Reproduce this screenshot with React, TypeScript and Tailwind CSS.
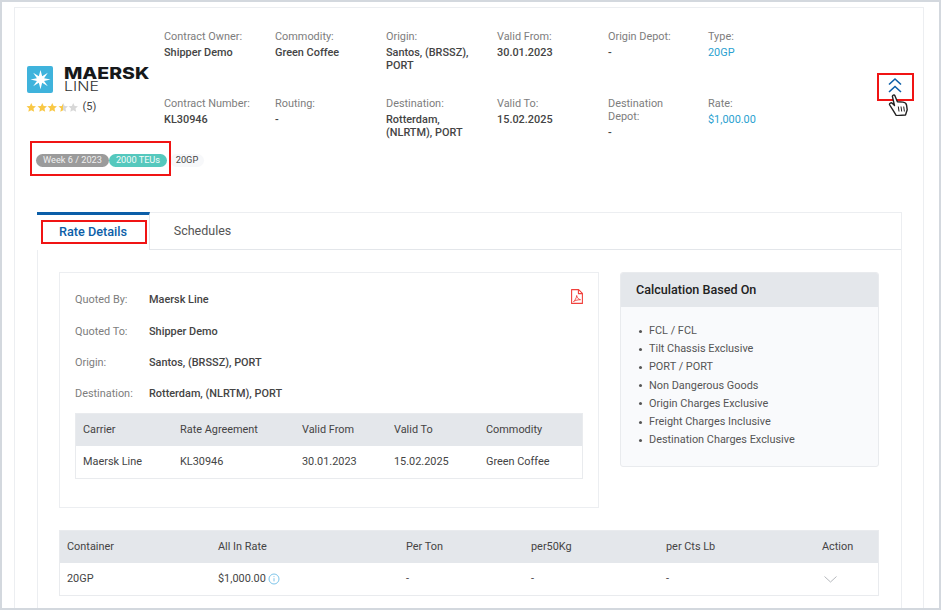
import React from "react";

const Field = ({ label, value, blue, w }: { label: React.ReactNode; value: React.ReactNode; blue?: boolean; w: string }) => (
  <div className={`${w} shrink-0`}>
    <div className="text-[10.9px] leading-[13px] text-[#7d7d7d]">{label}</div>
    <div className={`mt-[3px] text-[10.9px] leading-[13px] ${blue ? "font-normal text-[#2a9fd0]" : "font-medium text-[#444]"}`}>{value}</div>
  </div>
);

const Star = ({ c }: { c: string }) => (
  <svg width="10.5" height="11" viewBox="0 0 24 24" fill={c}>
    <path d="M12 1.5l3.2 7 7.6.8-5.7 5.1 1.6 7.5L12 18l-6.7 3.9 1.6-7.5L1.2 9.3l7.6-.8z" />
  </svg>
);

const Info = ({ label, value }: { label: string; value: string }) => (
  <div className="flex h-[31.3px] items-center text-[10.9px]">
    <span className="w-[74px] text-[#7d7d7d]">{label}</span>
    <span className="font-medium text-[#444]">{value}</span>
  </div>
);

const calc = [
  "FCL / FCL",
  "Tilt Chassis Exclusive",
  "PORT / PORT",
  "Non Dangerous Goods",
  "Origin Charges Exclusive",
  "Freight Charges Inclusive",
  "Destination Charges Exclusive",
];

export default function App() {
  return (
    <div className="relative h-[610px] w-[941px] overflow-hidden border-2 border-[#d3d8de] bg-white font-['Roboto',sans-serif]">
      <div className="ml-[12px] mt-[5px] h-[640px] w-[910px] border border-[#eceef1] bg-white">
        {/* header */}
        <div className="flex h-[204px]">
          <div className="w-[149px] shrink-0 pl-[12px] pt-[57px]">
            <div className="flex items-center">
              <div className="flex h-[27px] w-[26px] items-center justify-center rounded-[2px] bg-[#3fb3dc]">
                <svg width="21" height="21" viewBox="0 0 24 24" fill="#fff">
                  <path d="M12 1l1.9 7.4L20.4 4.2 16.1 10.5 23.5 12l-7.4 1.6 4.3 6.2-6.5-4.2L12 23l-1.9-7.4-6.5 4.2 4.3-6.2L.5 12l7.4-1.5L3.6 4.2l6.5 4.2z" />
                </svg>
              </div>
              <div className="ml-[11px] font-['Inter',sans-serif] text-[#16181a]">
                <div className="origin-left scale-x-[1.18] whitespace-nowrap text-[16.5px] font-extrabold leading-[16px]">MAERSK</div>
                <div className="origin-left scale-x-[1.28] text-[12.5px] font-light leading-[12px] text-[#333]">LINE</div>
              </div>
            </div>
            <div className="-ml-[1px] mt-[6px] flex items-center">
              <div className="flex">
                <Star c="#f9c846" /><Star c="#f9c846" /><Star c="#f9c846" />
                <svg width="10.5" height="11" viewBox="0 0 24 24">
                  <defs>
                    <linearGradient id="halfStar">
                      <stop offset="50%" stopColor="#f9c846" />
                      <stop offset="50%" stopColor="#d8d8d8" />
                    </linearGradient>
                  </defs>
                  <path fill="url(#halfStar)" d="M12 1.5l3.2 7 7.6.8-5.7 5.1 1.6 7.5L12 18l-6.7 3.9 1.6-7.5L1.2 9.3l7.6-.8z" />
                </svg>
                <Star c="#d8d8d8" />
              </div>
              <span className="ml-[4px] text-[11px] text-[#444]">(5)</span>
            </div>
            <div className="ml-[9px] mt-[38px] flex items-center whitespace-nowrap text-[9.2px]">
              <span className="flex h-[13px] w-[73px] shrink-0 items-center justify-center rounded-full bg-[#9b9b9b] text-[#f0f0f0]">Week 6 / 2023</span>
              <span className="flex h-[13px] w-[58px] shrink-0 items-center justify-center rounded-full bg-[#55c8bd] text-[#f4fbfa]">2000 TEUs</span>
              <span className="ml-[3px] flex h-[13px] w-[34px] shrink-0 items-center justify-center rounded-full bg-[#f7f8fa] text-[#444]">20GP</span>
            </div>
          </div>
          <div className="w-[650px] pt-[22px]">
            <div className="flex h-[67px]">
              <Field w="w-[111px]" label="Contract Owner:" value="Shipper Demo" />
              <Field w="w-[111px]" label="Commodity:" value="Green Coffee" />
              <Field w="w-[111px]" label="Origin:" value={<>Santos, (BRSSZ),<br />PORT</>} />
              <Field w="w-[111px]" label="Valid From:" value="30.01.2023" />
              <Field w="w-[100px]" label="Origin Depot:" value="-" />
              <Field w="w-[100px]" label="Type:" value="20GP" blue />
            </div>
            <div className="flex">
              <Field w="w-[111px]" label="Contract Number:" value="KL30946" />
              <Field w="w-[111px]" label="Routing:" value="-" />
              <Field w="w-[111px]" label="Destination:" value={<>Rotterdam,<br />(NLRTM), PORT</>} />
              <Field w="w-[111px]" label="Valid To:" value="15.02.2025" />
              <Field w="w-[100px]" label={<>Destination<br />Depot:</>} value="-" />
              <Field w="w-[100px]" label="Rate:" value="$1,000.00" blue />
            </div>
          </div>
        </div>

        {/* tab panel */}
        <div className="ml-[22px] w-[865px] border border-[#eceef1] pb-[40px]">
          <div className="flex h-[37px] border-b border-[#e3e6ea]">
            <div className="-ml-px -mt-px flex h-[38px] w-[113px] items-center justify-center border-r border-t-[3px] border-r-[#e3e6ea] border-t-[#0b5ea8] bg-white pb-[2px] text-[12.7px] font-medium text-[#0b5ea8]">
              Rate Details
            </div>
            <div className="flex w-[105px] items-center justify-center pt-[1px] text-[12.5px] text-[#555]">Schedules</div>
          </div>
          <div className="flex px-[21px] pt-[22px]">
            <div className="relative h-[236px] w-[540px] border border-[#eceef1] pl-[15px] pr-[15px] pt-[12px]">
              <svg className="absolute right-[15px] top-[16px]" width="12" height="15" viewBox="0 0 12 15" fill="none" stroke="#f0403c" strokeWidth="1.1" strokeLinejoin="round">
                <path d="M.6.6h7l3.8 3.8v10H.6z" />
                <path d="M7.4.6v4h4" />
                <path d="M2.5 12.5c1.5-1 3-3.6 3.2-6 .4 2.4 1.6 3.8 3.8 4.2-2.4 0-5 .6-7 1.8z" strokeWidth="0.9" />
              </svg>
              <Info label="Quoted By:" value="Maersk Line" />
              <Info label="Quoted To:" value="Shipper Demo" />
              <Info label="Origin:" value="Santos, (BRSSZ), PORT" />
              <Info label="Destination:" value="Rotterdam, (NLRTM), PORT" />
              <div className="mt-[3px] border border-[#e9ebee] text-[10.9px] text-[#444]">
                <div className="flex h-[32px] items-center bg-[#e4e7eb] pl-[7px]">
                  <span className="w-[97px]">Carrier</span>
                  <span className="w-[122px]">Rate Agreement</span>
                  <span className="w-[92px]">Valid From</span>
                  <span className="w-[92px]">Valid To</span>
                  <span>Commodity</span>
                </div>
                <div className="flex h-[32px] items-center pl-[7px]">
                  <span className="w-[97px]">Maersk Line</span>
                  <span className="w-[122px]">KL30946</span>
                  <span className="w-[92px]">30.01.2023</span>
                  <span className="w-[92px]">15.02.2025</span>
                  <span>Green Coffee</span>
                </div>
              </div>
            </div>
            <div className="ml-[21px] h-[195px] w-[259px] overflow-hidden rounded-[3px] border border-[#e9ebee] bg-[#f9fafc]">
              <div className="flex h-[34px] items-center bg-[#e4e7eb] px-[15px] text-[12.6px] font-medium text-[#222]">Calculation Based On</div>
              <ul className="pl-[18px] pt-[15px] text-[10.9px] leading-[18.2px] text-[#555]">
                {calc.map((c) => (
                  <li key={c} className="flex items-center">
                    <span className="mr-[7px] h-[3px] w-[3px] rounded-full bg-[#555]" />
                    {c}
                  </li>
                ))}
              </ul>
            </div>
          </div>
          <div className="ml-[21px] mt-[22px] w-[820px] border border-[#e9ebee] text-[10.9px] text-[#444]">
            <div className="flex h-[32px] items-center bg-[#e4e7eb] pl-[7px]">
              <span className="w-[151px]">Container</span>
              <span className="w-[188px]">All In Rate</span>
              <span className="w-[125px]">Per Ton</span>
              <span className="w-[135px]">per50Kg</span>
              <span className="w-[156px]">per Cts Lb</span>
              <span>Action</span>
            </div>
            <div className="flex h-[32px] items-center pl-[7px]">
              <span className="w-[151px]">20GP</span>
              <span className="flex w-[188px] items-center">
                $1,000.00
                <svg className="ml-[2px]" width="12" height="12" viewBox="0 0 12 12" fill="none" stroke="#6fbde6" strokeWidth="0.9">
                  <circle cx="6" cy="6" r="5" /><path d="M6 5.2v3.2M6 3.2v.9" />
                </svg>
              </span>
              <span className="w-[125px]">-</span>
              <span className="w-[135px]">-</span>
              <span className="w-[156px]">-</span>
              <svg className="ml-[2px]" width="13" height="7" viewBox="0 0 13 7" fill="none" stroke="#b5b8bc" strokeWidth="1">
                <path d="M.5.5l6 5.5 6-5.5" />
              </svg>
            </div>
          </div>
        </div>
      </div>

      {/* annotation overlays */}
      <div className="absolute left-[28px] top-[139px] h-[35px] w-[141px] border-2 border-[#f01414]" />
      <div className="absolute left-[39px] top-[218px] h-[24px] w-[106px] border-2 border-[#f01414]" />
      <div className="absolute left-[875px] top-[71px] h-[28px] w-[37px] border-2 border-[#f01414]" />
      <svg className="absolute left-[886px] top-[75px]" width="14" height="17" viewBox="0 0 14 17" fill="none" stroke="#0b5ea8" strokeWidth="1.6">
        <path d="M1 7.5l6-5.5 6 5.5M1 15l6-5.5 6 5.5" />
      </svg>
      <svg className="absolute left-[886px] top-[92px]" width="21" height="22" viewBox="0 0 21 22" fill="#fff" stroke="#222" strokeWidth="1.4" strokeLinejoin="round">
        <path d="M4.5 2.8c-.5-1.6 1.8-2.4 2.5-.9l2.4 5.8 5.6.4c2 .2 3.4 1.5 3.6 3.2l.6 4.5-1.7 5.2-9.2.6-2.7-4.4L1.7 11c-.8-1.7 1.6-3 2.8-1.4l2 2z" />
        <path d="M10.3 12.5l.7 5M13 12.5l.7 5M15.7 12.5l.7 5" strokeWidth="1" />
      </svg>
    </div>
  );
}
